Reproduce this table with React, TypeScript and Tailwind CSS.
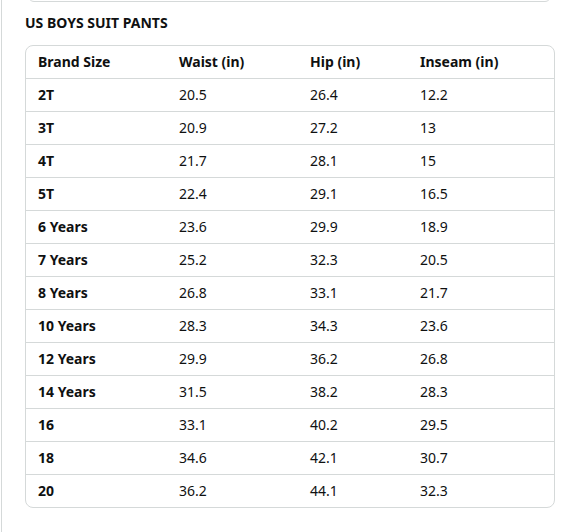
const rows: [string, string, string, string][] = [
  ['2T', '20.5', '26.4', '12.2'],
  ['3T', '20.9', '27.2', '13'],
  ['4T', '21.7', '28.1', '15'],
  ['5T', '22.4', '29.1', '16.5'],
  ['6 Years', '23.6', '29.9', '18.9'],
  ['7 Years', '25.2', '32.3', '20.5'],
  ['8 Years', '26.8', '33.1', '21.7'],
  ['10 Years', '28.3', '34.3', '23.6'],
  ['12 Years', '29.9', '36.2', '26.8'],
  ['14 Years', '31.5', '38.2', '28.3'],
  ['16', '33.1', '40.2', '29.5'],
  ['18', '34.6', '42.1', '30.7'],
  ['20', '36.2', '44.1', '32.3'],
];

const cols = 'grid grid-cols-[141px_131px_110px_1fr] items-center pb-[2px]';

export default function App() {
  return (
    <div className="relative h-[532px] w-[578px] overflow-hidden bg-white font-['Noto_Sans',sans-serif] text-[14px] text-[#0f1111]">
      {/* page edge and previous card */}
      <div className="absolute left-[1px] top-0 h-full w-px bg-[#d5d9d9]" />
      <div className="absolute left-[28px] top-[-10px] h-[12px] w-[523px] rounded-b-[6px] border border-[#d5d9d9]" />

      <div className="pl-[25px] pr-[23px] pt-[13px]">
        <h2 className="h-[20px] text-[14px] font-bold leading-[20px]">US BOYS SUIT PANTS</h2>

        <div className="mt-[12px] overflow-hidden rounded-[8px] border border-[#d5d9d9]">
          <div className={`${cols} h-[33px] border-b border-[#d5d9d9] font-bold`}>
            <div className="pl-[12px]">Brand Size</div>
            <div className="pl-[12px]">Waist (in)</div>
            <div className="pl-[12px]">Hip (in)</div>
            <div className="pl-[12px]">Inseam (in)</div>
          </div>
          {rows.map(([size, waist, hip, inseam], i) => (
            <div
              key={size}
              className={`${cols} ${i < rows.length - 1 ? 'h-[33px] border-b border-[#d5d9d9]' : 'h-[32px]'}`}
            >
              <div className="pl-[12px] font-bold">{size}</div>
              <div className="pl-[12px]">{waist}</div>
              <div className="pl-[12px]">{hip}</div>
              <div className="pl-[12px]">{inseam}</div>
            </div>
          ))}
        </div>
      </div>
    </div>
  );
}
